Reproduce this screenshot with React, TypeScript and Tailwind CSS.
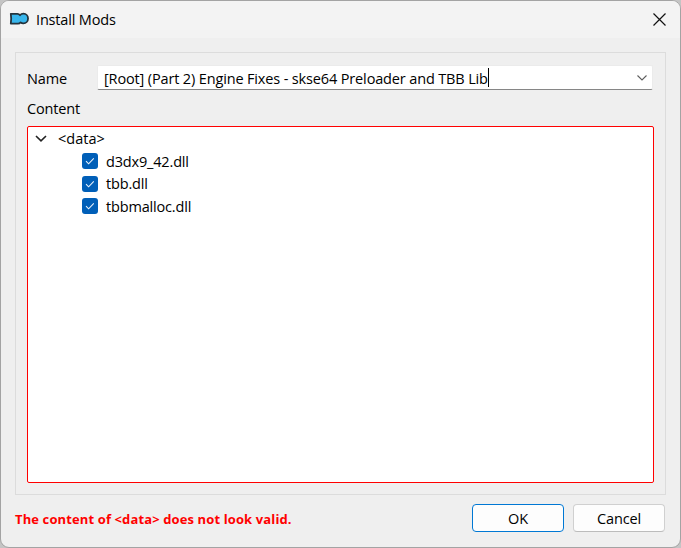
const files = ['d3dx9_42.dll', 'tbb.dll', 'tbbmalloc.dll'];

function Logo() {
  return (
    <svg width="20" height="14" viewBox="0 0 20 14" className="block">
      <path
        d="M1.8 1.8H8.4Q10 1.8 11 3.2Q12.2 1.7 14.5 1.7A4.5 4.8 0 0 1 14.5 11.4Q12.8 11.5 11.6 10.4Q10.6 11.6 9 11.6H1.8L2.2 6.6Z"
        fill="#38b6ec"
        stroke="#25343d"
        strokeWidth="1.8"
        strokeLinejoin="round"
      />
    </svg>
  );
}

function CheckBox() {
  return (
    <span className="flex size-4 items-center justify-center rounded-[3px] bg-[#005fb8]">
      <svg width="16" height="16" viewBox="0 0 16 16" fill="none">
        <path d="M4 8.2L6.6 10.8L11.8 5.4" stroke="#e8f1fa" strokeWidth="1.1" />
      </svg>
    </span>
  );
}

export default function App() {
  return (
    <div className="h-[548px] w-[681px] overflow-hidden bg-[#c4c4c4] font-['Open_Sans','Noto_Sans',sans-serif] text-[14.5px] leading-5 tracking-[-0.17px] text-black">
      <div className="flex h-full w-full flex-col overflow-hidden rounded-[9px] border border-[#a3a3a3] bg-[#efefef]">
        <header className="flex h-[37px] shrink-0 items-center bg-[#f3f3f3] pr-[14px] pb-px pl-2">
          <Logo />
          <h1 className="ml-[7px] grow whitespace-nowrap pt-[2px]">Install Mods</h1>
          <svg width="13" height="13" viewBox="0 0 13 13" fill="none">
            <path d="M0.5 0.5L12.5 12.5M12.5 0.5L0.5 12.5" stroke="#111" strokeWidth="1.2" />
          </svg>
        </header>

        <main className="mt-[14px] ml-[14px] flex h-[443px] w-[651px] shrink-0 flex-col border border-[#dcdcdc] pl-[11px]">
          <div className="mt-3 flex h-[25px] items-center">
            <label className="w-[70px] pt-[2px]">Name</label>
            <div className="flex h-[25px] w-[556px] items-center rounded-[2px] border border-[#ebebeb] border-b-[#868686] bg-white pr-[5px] pl-[6px]">
              <span className="whitespace-nowrap pt-[3px] tracking-[-0.145px]">
                [Root] (Part 2) Engine Fixes - skse64 Preloader and TBB Lib
              </span>
              <span className="h-[19px] w-px bg-black" />
              <svg width="10" height="6" viewBox="0 0 10 6" fill="none" className="ml-auto">
                <path d="M0.5 0.5L5 5L9.5 0.5" stroke="#5f5f5f" strokeWidth="1.1" />
              </svg>
            </div>
          </div>

          <div className="mt-[9px] h-[27px]">Content</div>

          <div className="h-[357px] w-[627px] rounded-[2px] border border-[#ff0000] bg-white">
            <div className="flex h-[23px] items-center pl-[7px]">
              <svg width="12" height="7" viewBox="0 0 12 7" fill="none">
                <path d="M1 1L6 5.8L11 1" stroke="#222" strokeWidth="1.6" />
              </svg>
              <span className="ml-[11px] pt-px tracking-normal">&lt;data&gt;</span>
            </div>
            {files.map((file) => (
              <div key={file} className="flex h-[22.6px] items-center pl-[54px]">
                <CheckBox />
                <span className="ml-2 whitespace-nowrap pt-px">{file}</span>
              </div>
            ))}
          </div>
        </main>

        <footer className="mt-[9px] flex h-7 shrink-0 items-center pl-[14px]">
          <p className="w-[457px] whitespace-nowrap pt-px text-[13px] font-bold tracking-[0.12px] text-[#ff0000]">
            The content of &lt;data&gt; does not look valid.
          </p>
          <button className="h-7 w-[92px] rounded-[4px] border border-[#0078d4] bg-[#fdfdfd] pt-px leading-[26px]">
            OK
          </button>
          <button className="ml-[9px] h-7 w-[92px] rounded-[4px] border border-[#d0d0d0] border-b-[#bcbcbc] bg-[#fdfdfd] pt-px leading-[26px]">
            Cancel
          </button>
        </footer>
      </div>
    </div>
  );
}
